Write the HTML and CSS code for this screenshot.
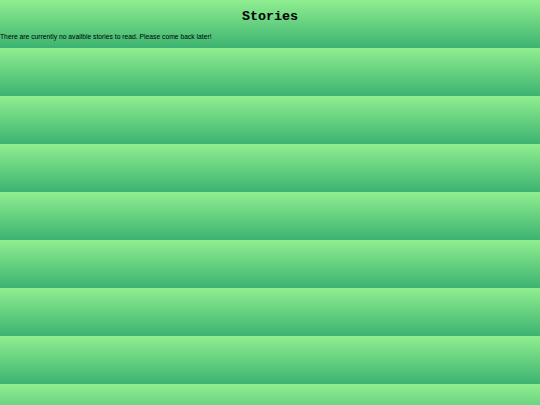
FILE: index.html
```html
<!DOCTYPE html>
<html>
<head>
<meta charset="utf-8">
<link rel="stylesheet" href="styles.css">
</head>
<body>
<h1 class="title">Stories</h1>
<p class="notice">There are currently no availble stories to read. Please come back later!</p>
</body>
</html>
```
FILE: styles.css
```css
html {
  height: 48px;
  background: linear-gradient(#90ee90, #3cb371);
}
body {
  margin: 0;
  height: 48px;
  overflow: visible;
}
.title {
  margin: 0;
  padding-top: 9px;
  font-family: "Liberation Mono", monospace;
  font-size: 13.4px;
  line-height: 16px;
  font-weight: bold;
  text-align: center;
  color: #000;
}
.notice {
  margin: 7px 0 0 0;
  font-family: "Liberation Sans", Arial, sans-serif;
  font-size: 6.75px;
  line-height: 10px;
  color: #000;
}
```
